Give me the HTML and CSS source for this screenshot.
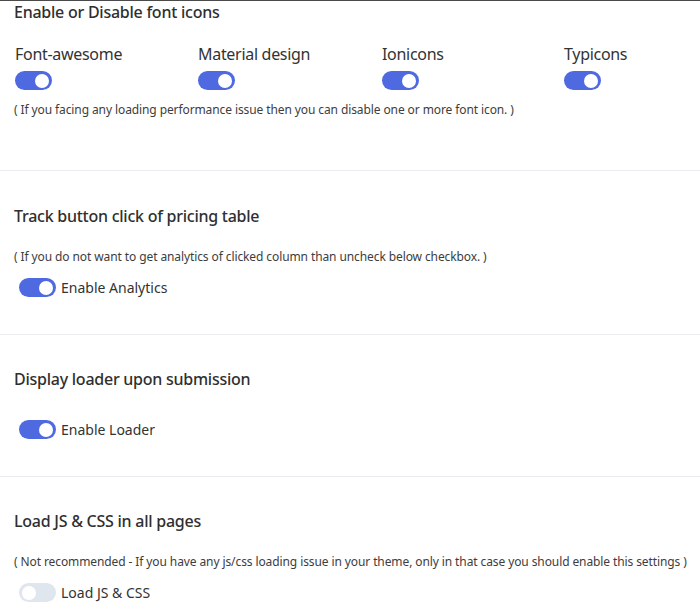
FILE: index.html
```html
<!DOCTYPE html>
<html>
<head>
<meta charset="utf-8">
<link rel="stylesheet" href="styles.css">
</head>
<body>
<div class="page">
  <section class="section first">
    <h2 class="title">Enable or Disable font icons</h2>
    <div class="icon-grid">
      <div class="icon-col">
        <span class="icon-label">Font-awesome</span>
        <span class="switch on"><span class="knob"></span></span>
      </div>
      <div class="icon-col">
        <span class="icon-label">Material design</span>
        <span class="switch on"><span class="knob"></span></span>
      </div>
      <div class="icon-col">
        <span class="icon-label">Ionicons</span>
        <span class="switch on"><span class="knob"></span></span>
      </div>
      <div class="icon-col">
        <span class="icon-label">Typicons</span>
        <span class="switch on"><span class="knob"></span></span>
      </div>
    </div>
    <p class="note note-first">( If you facing any loading performance issue then you can disable one or more font icon. )</p>
  </section>

  <section class="section s2">
    <h2 class="title">Track button click of pricing table</h2>
    <p class="note">( If you do not want to get analytics of clicked column than uncheck below checkbox. )</p>
    <label class="check-row">
      <span class="switch on"><span class="knob"></span></span>
      <span class="check-label">Enable Analytics</span>
    </label>
  </section>

  <section class="section s3">
    <h2 class="title">Display loader upon submission</h2>
    <label class="check-row loader-row">
      <span class="switch on"><span class="knob"></span></span>
      <span class="check-label">Enable Loader</span>
    </label>
  </section>

  <section class="section s4">
    <h2 class="title">Load JS &amp; CSS in all pages</h2>
    <p class="note">( Not recommended - If you have any js/css loading issue in your theme, only in that case you should enable this settings )</p>
    <label class="check-row">
      <span class="switch off"><span class="knob"></span></span>
      <span class="check-label">Load JS &amp; CSS</span>
    </label>
  </section>
</div>
</body>
</html>
```

FILE: styles.css
```css
html, body {
  margin: 0;
  padding: 0;
  background: #ffffff;
}

body {
  font-family: "Noto Sans", "Open Sans", sans-serif;
  color: #333333;
  width: 700px;
  height: 603px;
  overflow: hidden;
}

.page {
  border-top: 1px solid #4a4a4a;
}

.section {
  border-bottom: 1px solid #ececf0;
  padding: 0 14px;
}

.title {
  margin: 0;
  font-size: 16px;
  font-weight: 500;
  line-height: 22px;
  letter-spacing: -0.25px;
  color: #2f2f2f;
}

.section.first {
  height: 169px;
  padding-top: 0;
}

.icon-grid {
  display: grid;
  grid-template-columns: 183px 184px 182px 140px;
  margin-top: 20px;
  padding-left: 1px;
}

.icon-col {
  display: flex;
  flex-direction: column;
  align-items: flex-start;
  gap: 6px;
}

.icon-label {
  font-size: 16px;
  line-height: 22px;
  letter-spacing: -0.3px;
  color: #333;
}

.note {
  margin: 0;
  font-size: 12px;
  line-height: 18px;
  letter-spacing: -0.1px;
  color: #3d3d3d;
  white-space: nowrap;
}

.note-first {
  margin-top: 11px;
}

.switch {
  position: relative;
  display: inline-block;
  flex: none;
  width: 37px;
  height: 19px;
  border-radius: 10px;
  box-sizing: border-box;
}

.switch.on {
  background: #4f6ae0;
}

.switch.off {
  background: #e0e6ee;
}

.knob {
  position: absolute;
  top: 2.5px;
  width: 14px;
  height: 14px;
  border-radius: 50%;
  background: #ffffff;
}

.switch.on .knob {
  right: 3px;
}

.switch.off .knob {
  left: 3px;
}

.s2 {
  height: 164px;
  padding-top: 34px;
  box-sizing: border-box;
}

.s2 .note {
  margin-top: 21px;
}

.check-row {
  display: flex;
  align-items: center;
  gap: 5px;
  padding-left: 5px;
}

.s2 .check-row {
  margin-top: 12px;
}

.check-label {
  font-size: 14px;
  line-height: 19px;
  color: #333;
}

.s3 {
  height: 142px;
  padding-top: 33px;
  box-sizing: border-box;
}

.loader-row {
  margin-top: 30px;
}

.s4 {
  border-bottom: none;
  padding-top: 33px;
}

.s4 .note {
  margin-top: 21px;
}

.s4 .check-row {
  margin-top: 12px;
}
```
